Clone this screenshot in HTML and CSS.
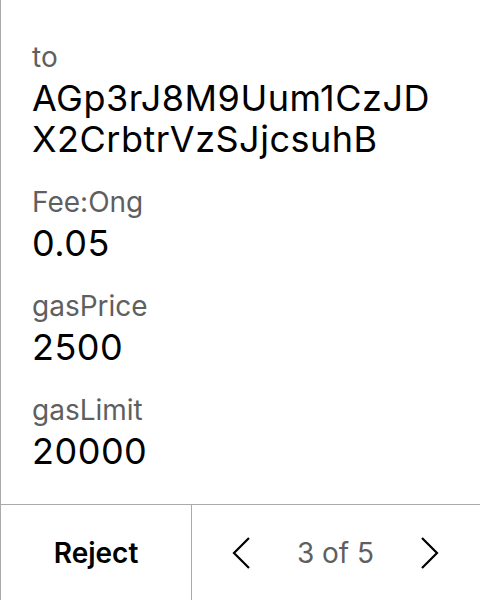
FILE: index.html
```html
<!DOCTYPE html>
<html lang="en">
<head>
<meta charset="utf-8">
<title>Transaction</title>
<link rel="stylesheet" href="styles.css">
</head>
<body>
<div class="screen">
  <div class="details">
    <div class="field">
      <div class="label">to</div>
      <div class="value address">AGp3rJ8M9Uum1CzJDX2CrbtrVzSJjcsuhB</div>
    </div>
    <div class="field">
      <div class="label">Fee:Ong</div>
      <div class="value">0.05</div>
    </div>
    <div class="field">
      <div class="label">gasPrice</div>
      <div class="value">2500</div>
    </div>
    <div class="field">
      <div class="label">gasLimit</div>
      <div class="value">20000</div>
    </div>
  </div>
  <div class="footer">
    <div class="reject">Reject</div>
    <div class="pager">
      <svg class="chev" width="18" height="32" viewBox="0 0 18 32"><path d="M17 1 L2 16 L17 31" fill="none" stroke="#000" stroke-width="2.2"/></svg>
      <span class="count">3 of 5</span>
      <svg class="chev" width="18" height="32" viewBox="0 0 18 32"><path d="M1 1 L16 16 L1 31" fill="none" stroke="#000" stroke-width="2.2"/></svg>
    </div>
  </div>
</div>
</body>
</html>
```
FILE: styles.css
```css
html, body {
  margin: 0;
  padding: 0;
  background: #fff;
}
body {
  font-family: Inter, "Noto Sans", sans-serif;
  color: #000;
}
.screen {
  width: 480px;
  height: 600px;
  box-sizing: border-box;
  border-left: 1px solid #aaaaaa;
  display: flex;
  flex-direction: column;
}
.details {
  flex: 1;
  padding: 40px 40px 0 31px;
}
.field {
  margin-bottom: 25px;
}
.label {
  font-size: 28px;
  line-height: 34px;
  color: #5f5f5f;
  margin-bottom: 4px;
}
.value {
  font-size: 36px;
  line-height: 41px;
  letter-spacing: 0.5px;
  color: #000;
}
.address {
  word-break: break-all;
}
.footer {
  height: 96px;
  box-sizing: border-box;
  border-top: 1px solid #aaaaaa;
  display: grid;
  grid-template-columns: 191px 1fr;
}
.reject {
  border-right: 1px solid #aaaaaa;
  display: flex;
  align-items: center;
  justify-content: center;
  font-size: 28px;
  font-weight: 600;
}
.pager {
  display: flex;
  align-items: center;
  justify-content: space-between;
  padding: 0 41px 0 40px;
}
.count {
  font-size: 28px;
  color: #5f5f5f;
}
.chev {
  display: block;
}
```
